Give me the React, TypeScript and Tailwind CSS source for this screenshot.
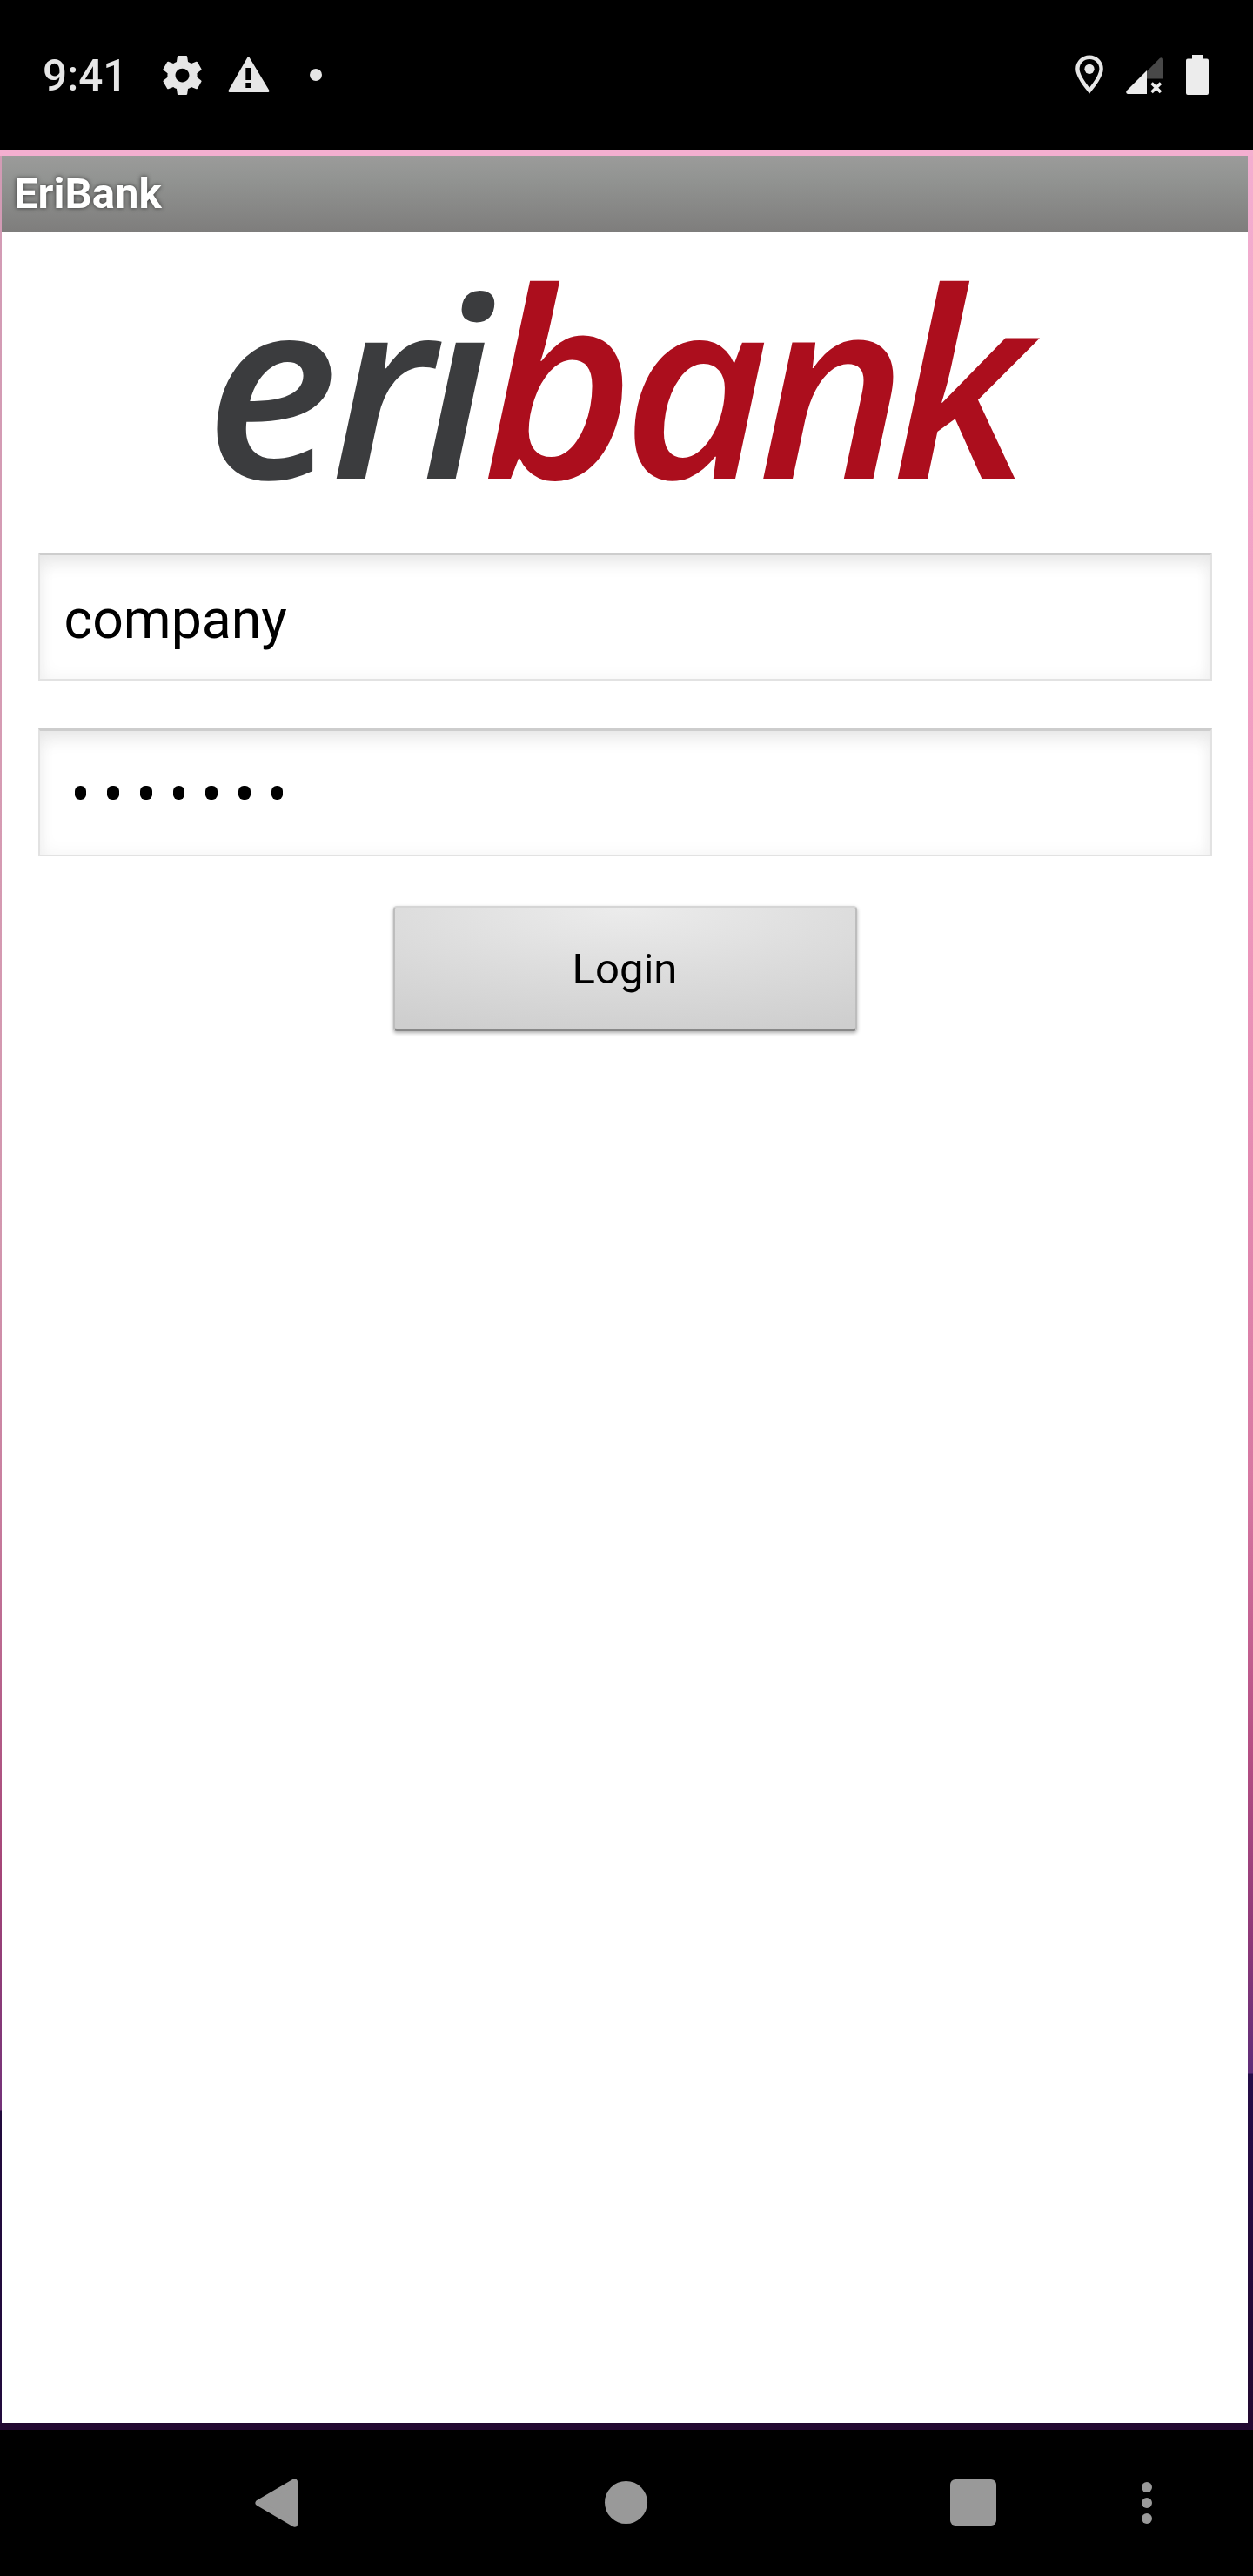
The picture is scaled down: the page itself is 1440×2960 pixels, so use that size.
const StatusBar = () => (
  <header className="flex h-[172px] items-start justify-between bg-black text-[#e6e6e6]">
    <div className="flex h-[172px] items-start">
      <span className="ml-[49px] mt-[58px] w-[92px] whitespace-nowrap text-[49.500px] font-medium leading-[59px]">9:41</span>
      <svg className="ml-[46px] mt-[64px] h-[45px] w-[45px]" viewBox="2.1 2 19.8 20" preserveAspectRatio="none" fill="currentColor">
        <path d="M19.43 12.98c.04-.32.07-.64.07-.98s-.03-.66-.07-.98l2.11-1.65c.19-.15.24-.42.12-.64l-2-3.46c-.12-.22-.39-.3-.61-.22l-2.49 1c-.52-.4-1.08-.73-1.69-.98l-.38-2.65A.488.488 0 0 0 14 2h-4c-.25 0-.46.18-.49.42l-.38 2.65c-.61.25-1.17.59-1.69.98l-2.49-1c-.23-.09-.49 0-.61.22l-2 3.46c-.13.22-.07.49.12.64l2.11 1.65c-.04.32-.07.65-.07.98s.03.66.07.98l-2.11 1.65c-.19.15-.24.42-.12.64l2 3.46c.12.22.39.3.61.22l2.49-1c.52.4 1.08.73 1.69.98l.38 2.65c.03.24.24.42.49.42h4c.25 0 .46-.18.49-.42l.38-2.65c.61-.25 1.17-.59 1.69-.98l2.49 1c.23.09.49 0 .61-.22l2-3.46c.12-.22.07-.49-.12-.64l-2.11-1.65zM12 15.5c-1.93 0-3.5-1.57-3.5-3.5s1.57-3.5 3.5-3.5 3.5 1.57 3.5 3.5-1.57 3.5-3.5 3.5z" />
      </svg>
      <svg className="ml-[30px] mt-[65px] h-[41px] w-[48px]" viewBox="0 0 48 41">
        <path d="M23.5 2 46 39.5H2Z" fill="currentColor" stroke="currentColor" strokeWidth="3" strokeLinejoin="round" />
        <path d="M20.3 13h6.4v14h-6.4zM20.3 30h6.4v6h-6.4z" fill="#000" />
      </svg>
      <span className="ml-[46px] mt-[79px] h-[14px] w-[14px] rounded-full bg-current" />
    </div>
    <div className="flex items-start text-[#ececec]">
      <svg className="mt-[63px] h-[46px] w-[32px]" viewBox="0 0 32 46">
        <path d="M16 2.7C8.500 2.700 2.400 8.700 2.400 16.100 2.400 24.500 10 34 16 41.200 22 34 29.600 24.500 29.600 16.100 29.600 8.700 23.500 2.700 16 2.700Z" fill="none" stroke="#e6e6e6" strokeWidth="4.4" />
        <circle cx="16" cy="16.300" r="5.600" fill="#e6e6e6" />
      </svg>
      <svg className="ml-[26px] mt-[66px] h-[42px] w-[42px]" viewBox="0 0 42 42">
        <path d="M24 16 39 .800Q42-1 42 3V24.500H24Z" fill="#484848" />
        <path d="M24 15V42H2Q-1 41 1 38Z" fill="currentColor" />
        <path d="m29.500 29.500 10.500 10.500m0-10.500-10.500 10.500" stroke="currentColor" strokeWidth="3.600" />
      </svg>
      <svg className="ml-[27px] mr-[51px] mt-[63px] h-[46px] w-[26px]" viewBox="0 0 26 46">
        <path d="M7 0h12v4.500h5q2 0 2 2V44q0 2-2 2H2q-2 0-2-2V6.500q0-2 2-2h5Z" fill="currentColor" />
      </svg>
    </div>
  </header>
);

const Logo = () => (
  <svg className="h-[270px] w-full overflow-visible" viewBox="2 300 1432 270" fontFamily="Open Sans, sans-serif" fontStyle="italic" fontWeight="600" fontSize="289">
    <text x="236 380 484" y="550" fill="#3b3c3e">eri</text>
    <text y="550" fill="#ac0e1d">
      <tspan x="554" fontSize="299">b</tspan>
      <tspan x="716 871">an</tspan>
      <tspan x="1025" fontSize="299">k</tspan>
    </text>
  </svg>
);

const field =
  "flex w-[1349px] items-center border-x-2 border-b-2 border-t-[3px] border-[#e2e2e2] border-t-[#cdcdcd] bg-white shadow-[inset_0_14px_22px_-8px_#e4e4e4,inset_0_0_20px_#f3f3f3]";

const NavBar = () => (
  <nav className="flex h-[168px] items-start bg-black text-[#999]">
    <svg className="ml-[293px] mt-[56px] h-[56px] w-[49px]" viewBox="0 0 49 56">
      <path d="M4 28 45.500 3.700V52.300Z" fill="currentColor" stroke="currentColor" strokeWidth="7" strokeLinejoin="round" />
    </svg>
    <span className="ml-[353px] mt-[59px] h-[49px] w-[49px] rounded-full bg-current" />
    <span className="ml-[348px] mt-[57px] h-[53px] w-[53px] rounded-[6px] bg-current" />
    <div className="ml-[167px] mt-[60px] flex flex-col gap-[6px]">
      <span className="h-3 w-3 rounded-full bg-current" />
      <span className="h-3 w-3 rounded-full bg-current" />
      <span className="h-3 w-3 rounded-full bg-current" />
    </div>
  </nav>
);

export default function App() {
  return (
    <div className="flex h-[2960px] w-[1440px] flex-col overflow-hidden bg-black font-[Roboto,sans-serif]">
      <StatusBar />
      <div className="flex h-[2620px] flex-col bg-[#220931]">
        <div className="h-[7px] bg-[#f4afd0]" />
        <div className="flex h-[2605px]">
          <div className="w-[2px] bg-[linear-gradient(180deg,#d29bb5_0,#d69bb3_700px,#d296ae_1250px,#c87d9e_1550px,#a54578_1970px,#733279_2246px,#220b3d_2247px)]" />
          <main className="flex w-[1432px] flex-col items-center bg-white">
            <div className="h-[88px] w-full bg-[linear-gradient(180deg,#9b9b9a,#929492_30%,#7e7d7c)] pl-[14px] pt-[14px] text-[49px] font-bold leading-[59px] text-white [text-shadow:0_0_5px_#333]">EriBank</div>
            <div className="mt-[33px] w-full"><Logo /></div>
            <div className={`${field} mt-[65px] h-[147px] pl-[28px] pt-[5px] text-[62.5px] text-black`}>company</div>
            <div className={`${field} mt-[55px] h-[147px] gap-6 pl-[40px]`}>
              {[0, 1, 2, 3, 4, 5, 6].map((i) => (
                <span key={i} className="h-4 w-[13.700px] rounded-[6px] bg-black" />
              ))}
            </div>
            <button className="mt-[57px] h-[144px] w-[533px] rounded-[4px] border-2 border-b-[3px] border-[#bdbdbd] border-b-[#888] border-t-[#d5d5d5] bg-[radial-gradient(ellipse_100%_110%_at_50%_0,#ececec,#dedede_45%,#cecece)] pt-[3px] text-[49px] text-black shadow-[0_2px_4px_#aaa]">Login</button>
          </main>
          <div className="w-[6px] bg-[linear-gradient(180deg,#f3add0_0,#f09abf_800px,#d778a2_1521px,#b54f84_1830px,#8d3878_2050px,#5e2d79_2203px,#250d48_2204px,#220931_2605px)]" />
        </div>
      </div>
      <NavBar />
    </div>
  );
}
